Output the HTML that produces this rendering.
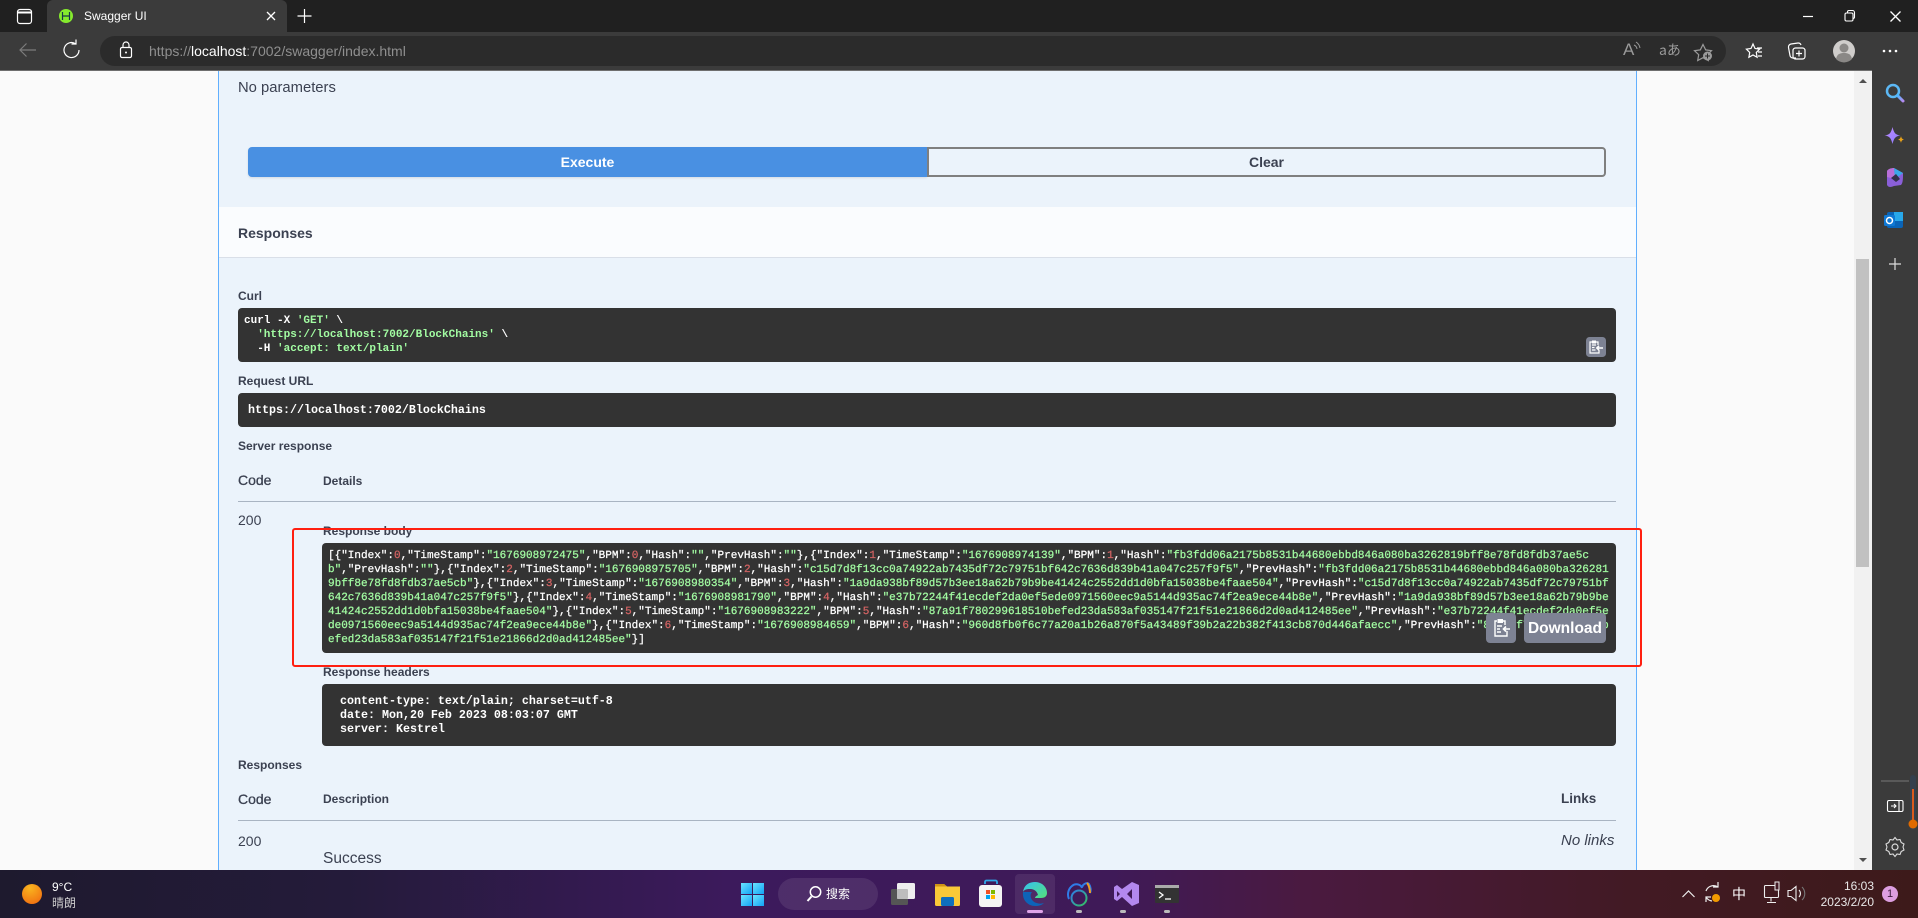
<!DOCTYPE html>
<html lang="en"><head><meta charset="utf-8"><title>Swagger UI</title>
<style>
html,body{margin:0;padding:0;width:1918px;height:918px;overflow:hidden;background:#fafafa;font-family:"Liberation Sans","Noto Sans CJK SC",sans-serif}
.a{position:absolute}
.t{position:absolute;white-space:pre;color:#3b4151}
.b{font-weight:bold}
svg{position:absolute;overflow:visible}
.code{position:absolute;background:#333;border-radius:4px}
.m{position:absolute;white-space:pre;font-family:"Liberation Mono",monospace;color:#fff;font-weight:bold}
.body{font-size:11px;line-height:14px;left:328px;top:549px;font-weight:normal;-webkit-text-stroke:.25px currentColor;text-rendering:geometricPrecision}
.s{color:#a2fca2}.n{color:#d36363}
</style></head><body>
<div class="a" style="left:0;top:0;width:1918px;height:32px;background:#202020"></div>
<div class="a" style="left:0;top:32px;width:1918px;height:38px;background:#3b3b3b"></div>
<div class="a" style="left:47px;top:0;width:240px;height:33px;background:#3b3b3b;border-radius:6px 6px 0 0"></div>
<svg style="left:0;top:0" width="300" height="70" fill="none" stroke="#fff">
<rect x="17.500" y="9.500" width="14" height="14" rx="2.500" stroke-width="1.200"/><path d="M18 12.500h13" stroke-width="2"/>
<circle cx="66" cy="16" r="7" fill="#85ea2d" stroke="none"/><path d="M62.500 12v8M69.500 12v8M62.500 16h7" stroke="#173647" stroke-width="1.200"/>
<path d="M267 12l8 8M275 12l-8 8" stroke-width="1.300"/><path d="M304.500 9v14M297.500 16h14" stroke-width="1.200"/>
<path d="M36 50H20M26.500 43.500L20 50l6.500 6.500" stroke="#7c7c7c" stroke-width="1.200"/>
<path d="M79 50a7.500 7.500 0 1 1-3.500-6.300M76 39.500v4.500h-4.500" stroke-width="1.200"/>
</svg>
<div class="t" style="left:84px;top:8px;line-height:16px;font-size:12px;color:#fff">Swagger UI</div>
<div class="a" style="left:100px;top:36px;width:1626px;height:30px;background:#2b2b2b;border-radius:15px"></div>
<svg style="left:0;top:0" width="140" height="70" fill="none" stroke="#fff"><rect x="120.500" y="47.500" width="11" height="10" rx="1.500" stroke-width="1.200"/><path d="M123 47.500v-2.500a3 3 0 0 1 6 0v2.500" stroke-width="1.200"/><circle cx="126" cy="52.500" r="1" fill="#fff" stroke="none"/></svg>
<div class="t" style="left:149px;top:42px;line-height:18px;font-size:14px;color:#8f8f8f">https://<span style="color:#fff">localhost</span>:7002/swagger/index.html</div>
<div class="t" style="left:1623px;top:39px;line-height:22px;font-size:17px;color:#9a9a9a">A</div>
<svg style="left:0;top:0" width="1918" height="70" fill="none" stroke="#fff">
<path d="M1634 45a5 5 0 0 1 3 4M1636 42a9 9 0 0 1 4 6" stroke="#9a9a9a"/>
<path d="M1703 44.500l2.700 5.400 5.800.8-4.200 4 1 5.800-5.300-2.800-5.300 2.800 1-5.800-4.200-4 5.800-.8z" stroke="#9a9a9a" stroke-width="1.200"/>
<circle cx="1707.500" cy="56" r="4.500" fill="#9a9a9a" stroke="none"/><path d="M1707.500 53.500v5M1705 56h5" stroke="#2b2b2b"/>
<path d="M1753 44l2 4.500 4.600.7-3.300 3.300.8 4.800-4.100-2.300-4.100 2.300.8-4.800-3.300-3.300 4.600-.7z" stroke-width="1.200"/><path d="M1757 48h5M1758 52h4M1758 56h4" stroke-width="1.200"/>
<path d="M1796 58h-3a3 3 0 0 1-3-2.500l-1.500-8a3 3 0 0 1 2.500-3.500l7-1a3 3 0 0 1 3 2" stroke-width="1.200"/><rect x="1793" y="48" width="12" height="11" rx="2.500" stroke-width="1.200"/><path d="M1799 50.500v6M1796 53.500h6" stroke-width="1.200"/>
<path d="M1803 16.500h10" stroke-width="1.200"/><rect x="1845" y="13" width="8" height="8" rx="1.500" stroke-width="1.100"/><path d="M1847.500 13v-1a1.500 1.500 0 0 1 1.500-1.500h3.500a2 2 0 0 1 2 2v4.500a1.500 1.500 0 0 1-1.500 1.500" stroke-width="1.100"/>
<path d="M1890.500 11.500l10 10M1900.500 11.500l-10 10" stroke-width="1.300"/>
<circle cx="1844" cy="51" r="11" fill="#cfcdcb" stroke="none"/><circle cx="1844" cy="48" r="4.500" fill="#8a8886" stroke="none"/><path d="M1836 59c1-5 4-6 8-6s7 1 8 6a11 11 0 0 1-16 0z" fill="#8a8886" stroke="none"/>
<circle cx="1884" cy="51" r="1.300" fill="#fff" stroke="none"/><circle cx="1890" cy="51" r="1.300" fill="#fff" stroke="none"/><circle cx="1896" cy="51" r="1.300" fill="#fff" stroke="none"/>
</svg>
<div class="t" style="left:1659px;top:40px;line-height:20px;font-size:14px;color:#9a9a9a;font-family:'Noto Sans CJK JP',sans-serif">aあ</div>

<!-- page -->
<div class="a" style="left:0;top:70px;width:1872px;height:800px;background:#fafafa"></div>
<div class="a" style="left:0;top:70px;width:1872px;height:1px;background:#6e6e6e"></div>
<div class="a" style="left:218px;top:71px;height:799px;background:#ebf3fb;border-left:1px solid #61affe;border-right:1px solid #61affe;box-sizing:border-box;width:1419px"></div>
<div class="a" style="left:219px;top:207px;width:1417px;height:50px;background:#fafcfe;border-bottom:1px solid #d9dfe8"></div>

<div class="t" style="left:238px;top:78px;line-height:20px;font-size:14.800px">No parameters</div>
<div class="a b" style="left:248px;top:147px;width:679px;height:30px;line-height:30px;background:#4990e2;border-radius:4px 0 0 4px;color:#fff;text-align:center;font-size:14px;box-shadow:0 1px 2px rgba(0,0,0,.1)">Execute</div>
<div class="a b" style="left:927px;top:147px;width:679px;height:30px;line-height:26px;box-sizing:border-box;border:2px solid #7f7f7f;border-radius:0 4px 4px 0;color:#3b4151;text-align:center;font-size:14px">Clear</div>
<div class="t b" style="left:238px;top:223px;line-height:20px;font-size:14px">Responses</div>

<div class="t b" style="left:238px;top:288px;line-height:16px;font-size:12px">Curl</div>
<div class="code" style="left:238px;top:308px;width:1378px;height:54px"></div>
<div class="m" style="left:244px;top:314px;font-size:11px;line-height:14px">curl -X <span class="s">'GET'</span> \
  <span class="s">'https://localhost:7002/BlockChains'</span> \
  -H <span class="s">'accept: text/plain'</span></div>
<div class="t b" style="left:238px;top:373px;line-height:16px;font-size:12px">Request URL</div>
<div class="code" style="left:238px;top:393px;width:1378px;height:34px"></div>
<div class="m" style="left:248px;top:402px;font-size:11.670px;line-height:16px">https://localhost:7002/BlockChains</div>
<div class="t b" style="left:238px;top:438px;line-height:16px;font-size:12px">Server response</div>
<div class="t" style="left:238px;top:470px;line-height:20px;font-size:14px;-webkit-text-stroke:.3px #3b4151">Code</div>
<div class="t b" style="left:323px;top:473px;line-height:16px;font-size:12px">Details</div>
<div class="a" style="left:238px;top:501px;width:1378px;height:1px;background:#a9b4c2"></div>
<div class="t" style="left:238px;top:510px;line-height:20px;font-size:14px">200</div>

<div class="t b" style="left:323px;top:523px;line-height:16px;font-size:12px">Response body</div>
<div class="code" style="left:322px;top:543px;width:1294px;height:110px"></div>
<div class="m body">[{"Index":<span class="n">0</span>,"TimeStamp":<span class="s">"1676908972475"</span>,"BPM":<span class="n">0</span>,"Hash":<span class="s">""</span>,"PrevHash":<span class="s">""</span>},{"Index":<span class="n">1</span>,"TimeStamp":<span class="s">"1676908974139"</span>,"BPM":<span class="n">1</span>,"Hash":<span class="s">"fb3fdd06a2175b8531b44680ebbd846a080ba3262819bff8e78fd8fdb37ae5c</span>
<span class="s">b"</span>,"PrevHash":<span class="s">""</span>},{"Index":<span class="n">2</span>,"TimeStamp":<span class="s">"1676908975705"</span>,"BPM":<span class="n">2</span>,"Hash":<span class="s">"c15d7d8f13cc0a74922ab7435df72c79751bf642c7636d839b41a047c257f9f5"</span>,"PrevHash":<span class="s">"fb3fdd06a2175b8531b44680ebbd846a080ba326281</span>
<span class="s">9bff8e78fd8fdb37ae5cb"</span>},{"Index":<span class="n">3</span>,"TimeStamp":<span class="s">"1676908980354"</span>,"BPM":<span class="n">3</span>,"Hash":<span class="s">"1a9da938bf89d57b3ee18a62b79b9be41424c2552dd1d0bfa15038be4faae504"</span>,"PrevHash":<span class="s">"c15d7d8f13cc0a74922ab7435df72c79751bf</span>
<span class="s">642c7636d839b41a047c257f9f5"</span>},{"Index":<span class="n">4</span>,"TimeStamp":<span class="s">"1676908981790"</span>,"BPM":<span class="n">4</span>,"Hash":<span class="s">"e37b72244f41ecdef2da0ef5ede0971560eec9a5144d935ac74f2ea9ece44b8e"</span>,"PrevHash":<span class="s">"1a9da938bf89d57b3ee18a62b79b9be</span>
<span class="s">41424c2552dd1d0bfa15038be4faae504"</span>},{"Index":<span class="n">5</span>,"TimeStamp":<span class="s">"1676908983222"</span>,"BPM":<span class="n">5</span>,"Hash":<span class="s">"87a91f780299618510befed23da583af035147f21f51e21866d2d0ad412485ee"</span>,"PrevHash":<span class="s">"e37b72244f41ecdef2da0ef5e</span>
<span class="s">de0971560eec9a5144d935ac74f2ea9ece44b8e"</span>},{"Index":<span class="n">6</span>,"TimeStamp":<span class="s">"1676908984659"</span>,"BPM":<span class="n">6</span>,"Hash":<span class="s">"960d8fb0f6c77a20a1b26a870f5a43489f39b2a22b382f413cb870d446afaecc"</span>,"PrevHash":<span class="s">"87a91f780299618510b</span>
<span class="s">efed23da583af035147f21f51e21866d2d0ad412485ee"</span>}]</div>
<div class="a" style="left:1486px;top:613px;width:30px;height:30px;background:#7d8293;border-radius:4px"></div>
<div class="a b" style="left:1524px;top:613px;width:82px;height:30px;line-height:32px;background:#7d8293;border-radius:4px;color:#fff;text-align:center;font-size:15.500px">Download</div>
<svg style="left:1486px;top:613px" width="30" height="30" fill="none" stroke="#fff" stroke-width="1.400"><path d="M11 8H9v15h12v-5M19 12V8h-2"/><rect x="11.500" y="6" width="5.500" height="4" fill="#fff" stroke="none"/><path d="M11 13h5M11 16h3M11 19h4"/><path d="M24 16h-6M20 13.500L17.500 16l2.500 2.500" stroke-width="1.600"/></svg>
<svg style="left:1586px;top:337px" width="20" height="20"><rect width="20" height="20" rx="3.500" fill="#7d8293"/><g fill="none" stroke="#fff" stroke-width="1.200"><path d="M6 5H4v11h9v-3M12 8V5h-2"/><path d="M6 8h4M6 10.500h2.500M6 13h3.500"/><path d="M17 11h-6M13 8.800L10.800 11l2.200 2.200" stroke-width="1.500"/></g><rect x="6" y="3.500" width="4" height="3" fill="#fff"/></svg>

<div class="a" style="left:292px;top:528px;width:1350px;height:139px;box-sizing:border-box;border:2px solid #ff1f10;border-radius:3px"></div>

<div class="t b" style="left:323px;top:664px;line-height:16px;font-size:12px">Response headers</div>
<div class="code" style="left:322px;top:684px;width:1294px;height:62px"></div>
<div class="m" style="left:340px;top:694px;font-size:11.670px;line-height:14px">content-type: text/plain; charset=utf-8
date: Mon,20 Feb 2023 08:03:07 GMT
server: Kestrel</div>
<div class="t b" style="left:238px;top:757px;line-height:16px;font-size:12px">Responses</div>
<div class="t" style="left:238px;top:789px;line-height:20px;font-size:14px;-webkit-text-stroke:.3px #3b4151">Code</div>
<div class="t b" style="left:323px;top:791px;line-height:16px;font-size:12px">Description</div>
<div class="t b" style="left:1561px;top:789px;line-height:20px;font-size:13.500px">Links</div>
<div class="a" style="left:238px;top:820px;width:1378px;height:1px;background:#a9b4c2"></div>
<div class="t" style="left:238px;top:831px;line-height:20px;font-size:14px">200</div>
<div class="t" style="left:323px;top:849px;line-height:20px;font-size:15.500px">Success</div>
<div class="t" style="left:1561px;top:831px;line-height:20px;font-size:15px;font-style:italic">No links</div>

<!-- scrollbar -->
<div class="a" style="left:1854px;top:71px;width:18px;height:799px;background:#f1f1f1"></div>
<div class="a" style="left:1856px;top:259px;width:13px;height:308px;background:#c1c1c1"></div>
<svg style="left:1854px;top:71px" width="18" height="799"><path d="M5 12l4-4 4 4z" fill="#505050"/><path d="M5 787l4 4 4-4z" fill="#505050"/></svg>
<!-- sidebar -->
<div class="a" style="left:1872px;top:70px;width:46px;height:800px;background:#3b3b3b"></div>
<svg style="left:1872px;top:70px" width="46" height="800" fill="none">
<defs><linearGradient id="g1" x1="0" y1="0" x2="1" y2="1"><stop offset="0" stop-color="#4db8ff"/><stop offset="1" stop-color="#b48bf0"/></linearGradient><linearGradient id="g2" x1="0" y1="0" x2="1" y2="1"><stop offset="0" stop-color="#c08bff"/><stop offset="1" stop-color="#8a7bff"/></linearGradient></defs>
<circle cx="21" cy="21" r="6" stroke="#5cb8f5" stroke-width="2.500"/><path d="M25.500 25.500l5.500 5.500" stroke="url(#g1)" stroke-width="3" stroke-linecap="round"/>
<path d="M20.500 57c1.500 6 3 8 8 8.500-5 .5-6.500 2.500-8 8.500-1.500-6-3-8-8-8.500 5-.5 6.500-2.500 8-8.500z" fill="url(#g2)"/><path d="M29 66c.5 2 1 3 3 3.500-2 .5-2.500 1.500-3 3.500-.5-2-1-3-3-3.500 2-.5 2.500-1.500 3-3.500z" fill="#e8a21a"/>
<path d="M15 104c1-3 4-5 7-6l9 5c0 6 0 10-2 12l-7 1c-3 1-5 2-7-1z" fill="#8a5fd8"/><path d="M15 101c1-2 4-3 7-3l1 11-8-2z" fill="#b96fd8"/><path d="M22 98l9 5-8 6z" fill="#3aa8e8"/><path d="M19 108l5-4 4 5-4 3z" fill="#33314a"/>
<rect x="15" y="142" width="16" height="16" rx="2" fill="#0a64b8"/><rect x="22" y="142" width="9" height="9" fill="#28a8ea"/><rect x="12" y="145" width="11" height="11" rx="1.500" fill="#0f78d4"/><circle cx="17.500" cy="150.500" r="3" stroke="#fff" stroke-width="1.500"/>
<path d="M23 188v12M17 194h12" stroke="#ddd" stroke-width="1.200"/>
<path d="M9 711h28" stroke="#777"/>
<rect x="15.500" y="730.500" width="15.500" height="11" rx="1.500" stroke="#fff" stroke-width="1.100"/><path d="M27 730.500v11" stroke="#fff" stroke-width="1.100"/><path d="M19 736h5M22 734l2 2-2 2" stroke="#fff" stroke-width="1.100"/>
<circle cx="23" cy="777" r="3" stroke="#ddd" stroke-width="1.200"/><path d="M23 769l2 2.500 3-.5 1.200 3 2.800 1.500-1 3 1 3-2.800 1.500-1.200 3-3-.5-2 2.500-2-2.500-3 .5-1.200-3-2.800-1.500 1-3-1-3 2.800-1.500 1.200-3 3 .5z" stroke="#ddd" stroke-width="1.100" transform="translate(0 -1.500)"/>
<rect x="38" y="705" width="6" height="55" rx="3" fill="#34404d"/><rect x="40" y="719" width="2" height="36" fill="#d85a1e"/><circle cx="41" cy="754" r="4.500" fill="#e06a00"/>
</svg>

<!-- taskbar -->
<div class="a" style="left:0;top:870px;width:1918px;height:48px;background:linear-gradient(90deg,#1e1a2e 0%,#241b3a 18%,#3c1a5c 38%,#3f1a58 58%,#4a1a40 68%,#421a24 85%,#3d1a1a 100%)"></div>
<div class="a" style="left:1015px;top:874px;width:40px;height:40px;border-radius:4px;background:rgba(255,255,255,.08)"></div>
<div class="a" style="left:778px;top:878px;width:100px;height:32px;border-radius:16px;background:rgba(255,255,255,.09)"></div>
<svg style="left:0;top:870px" width="1918" height="48" fill="none">
<defs><radialGradient id="sun" cx=".4" cy=".2" r="1"><stop offset="0" stop-color="#f9b51f"/><stop offset="1" stop-color="#f0650f"/></radialGradient><linearGradient id="win" x1="0" y1="0" x2="1" y2="1"><stop offset="0" stop-color="#6ae4ff"/><stop offset="1" stop-color="#12a2f5"/></linearGradient><linearGradient id="edge" x1="0" y1="0" x2="1" y2="1"><stop offset="0" stop-color="#35c1f1"/><stop offset="1" stop-color="#54e07a"/></linearGradient><linearGradient id="ring" x1="0" y1="0" x2="1" y2="1"><stop offset="0" stop-color="#2f7be8"/><stop offset="1" stop-color="#35c15f"/></linearGradient></defs>
<circle cx="32" cy="24" r="10" fill="url(#sun)"/>
<g fill="url(#win)"><rect x="741" y="13" width="11" height="11"/><rect x="753" y="13" width="11" height="11"/><rect x="741" y="25" width="11" height="11"/><rect x="753" y="25" width="11" height="11"/></g>
<circle cx="815.500" cy="22" r="5.200" stroke="#fff" stroke-width="1.500"/><path d="M811.500 26.500l-4 4.500" stroke="#fff" stroke-width="2"/>
<rect x="891" y="19" width="17" height="16" rx="1.500" fill="#555"/><rect x="897" y="13" width="18" height="16" rx="1.500" fill="#eee"/><rect x="897" y="19" width="11" height="10" rx="1" fill="#bdbdbd"/>
<path d="M935 14h9l3 2.500h13v18a1.500 1.500 0 0 1-1.500 1.500h-22a1.500 1.500 0 0 1-1.500-1.500z" fill="#f9c938"/><path d="M935 14h9l3 2.500h-12z" fill="#cf9415"/><rect x="941" y="27" width="13" height="9" rx="1.500" fill="#0f6fbd"/>
<path d="M985 14v-2a1.500 1.500 0 0 1 1.500-1.500h9a1.500 1.500 0 0 1 1.500 1.500v2" stroke="#2ea8e8" stroke-width="1.800"/><rect x="979" y="15" width="23" height="22" rx="3" fill="#f4f4f4"/><rect x="986" y="20" width="4" height="4" fill="#f25022"/><rect x="991" y="20" width="4" height="4" fill="#7fba00"/><rect x="986" y="25" width="4" height="4" fill="#00a4ef"/><rect x="991" y="25" width="4" height="4" fill="#ffb900"/>
<path d="M1023 22c1-7 6-10 12-10 7 0 12 5 12 11 0 3-2 5-6 5h-6c0-1 1-2 3-3-1-4-4-6-8-6s-6 1-7 3z" fill="url(#edge)"/><path d="M1023 22c-1 8 5 14 12 14 4 0 7-1 9-3-2 1-8 1-11-2-3-3-3-7-1-9-4 0-7 0-9 0z" fill="#0d63b8"/>
<path d="M1082 18c-1-4-7-5-10-2-4 3-5 9-3 13M1082 17c1-3 5-5 7-3 2 3 2 7 1 9" stroke="#2f7be8" stroke-width="2"/><path d="M1087 13c2 2 3 7 3 10" stroke="#f0a020" stroke-width="2"/><circle cx="1079" cy="28" r="7.500" stroke="url(#ring)" stroke-width="2"/>
<path d="M1132 12l7 3v18l-7 3-10-9-5 4-3-2v-12l3-2 5 4zm0 7l-5 5 5 5zM1117 21v6l3-3z" fill="#b388ee"/>
<rect x="1155" y="15" width="24" height="18" rx="1" fill="#333"/><rect x="1155" y="15" width="24" height="3" fill="#aaa"/><path d="M1159 22l4 3-4 3" stroke="#fff" stroke-width="1.300"/><path d="M1165 29h6" stroke="#fff" stroke-width="1.300"/>
<rect x="1027" y="40" width="16" height="3" rx="1.500" fill="#e0a3e8"/>
<rect x="1076" y="40" width="6" height="3" rx="1.500" fill="#bbb"/><rect x="1120" y="40" width="6" height="3" rx="1.500" fill="#bbb"/><rect x="1164" y="40" width="6" height="3" rx="1.500" fill="#bbb"/>
<path d="M1682.500 27l6-6 6 6" stroke="#eee" stroke-width="1.200"/>
<path d="M1706 21a8 8 0 0 1 12-4M1718 12v5h-5M1706 32v-5h5M1706 27a8 8 0 0 0 6 4" stroke="#eee" stroke-width="1.200"/><circle cx="1716" cy="28" r="4" fill="#f29a00"/>
<rect x="1764.500" y="15.500" width="14" height="12" rx="1" stroke="#eee" stroke-width="1.100"/><path d="M1771 27.500v4M1767 32.500h9" stroke="#eee" stroke-width="1.100"/><rect x="1775" y="12" width="4" height="8" fill="#421a24" stroke="#eee"/>
<path d="M1788 20.500h3l5-4v14l-5-4h-3z" stroke="#eee" stroke-width="1.100"/><path d="M1799 20a5 5 0 0 1 0 7" stroke="#eee" stroke-width="1.100"/><path d="M1802 17a9 9 0 0 1 0 13" stroke="#777" stroke-width="1.100"/>
<circle cx="1890" cy="24" r="8" fill="#dd9ee0"/>
</svg>
<div class="t" style="left:52px;top:879px;line-height:16px;font-size:12px;color:#fff">9°C</div>
<div class="t" style="left:52px;top:895px;line-height:16px;font-size:12px;color:#ccc;font-family:'Noto Sans CJK SC',sans-serif">晴朗</div>
<div class="t" style="left:826px;top:885px;line-height:18px;font-size:12px;color:#fff;font-family:'Noto Sans CJK SC',sans-serif">搜索</div>
<div class="t" style="left:1732px;top:884px;line-height:20px;font-size:14px;color:#fff;font-family:'Noto Sans CJK SC',sans-serif">中</div>
<div class="t" style="left:1800px;top:878px;width:74px;text-align:right;line-height:16px;font-size:12px;color:#e8e8e8">16:03</div>
<div class="t" style="left:1800px;top:894px;width:74px;text-align:right;line-height:16px;font-size:12px;color:#e8e8e8">2023/2/20</div>
<div class="t" style="left:1882px;top:886px;width:16px;text-align:center;line-height:16px;font-size:11px;color:#3a1a3a">1</div>
</body></html>
